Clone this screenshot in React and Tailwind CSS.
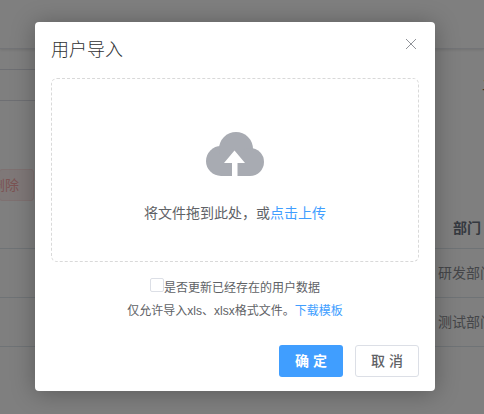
const font = { fontFamily: '"Liberation Sans", "Noto Sans CJK SC", sans-serif' };

function Cloud() {
  return (
    <svg width="60" height="46" viewBox="206 132 60 46" className="block">
      <g fill="#a8abb2">
        <circle cx="222" cy="161" r="15" />
        <circle cx="237" cy="149" r="17" />
        <circle cx="251" cy="162" r="14" />
        <rect x="222" y="150" width="29" height="26" />
      </g>
      <path d="M235.5 150.5 L246 163 L238.5 163 L238.5 178 L233 178 L233 163 L225 163 Z" fill="#fff" />
    </svg>
  );
}

export default function App() {
  return (
    <div style={font} className="relative w-[484px] h-[414px] overflow-hidden bg-white text-[14px] text-[#606266]">
      {/* page behind the overlay */}
      <div className="h-[49px] border-b border-[#e6e9ef] shadow-[0_1px_3px_rgba(0,0,0,0.12)]" />
      <div className="mt-[20px] h-[32px] flex items-center">
        <div className="w-[40px] h-[32px] shrink-0 border-y border-[#dcdfe6]" />
        <span className="ml-[442px] shrink-0 whitespace-nowrap text-[#8a6d4f]">二</span>
      </div>
      <div className="mt-[68px] w-[35px] h-[32px] flex items-center justify-end border border-[#fde2e2] bg-[#fef0f0] rounded-[3px] -ml-px text-[14px] text-[#f9a7a7]">
        <span className="whitespace-nowrap pr-[14px]">删除</span>
      </div>
      <div className="mt-[7px] h-[41px] border-b border-[#dfe6ec] flex items-center pl-[453px] font-bold text-[#6b7280] text-[14px] whitespace-nowrap">部门</div>
      <div className="h-[49px] border-b border-[#dfe6ec] flex items-center pl-[438px] whitespace-nowrap text-[#8a8d92]">研发部门</div>
      <div className="h-[49px] border-b border-[#dfe6ec] flex items-center pl-[438px] whitespace-nowrap text-[#8a8d92]">测试部门</div>

      {/* overlay */}
      <div className="absolute inset-0 bg-black/50">
        <div className="ml-[35px] mt-[22px] w-[400px] h-[369px] bg-white rounded-[4px] shadow-[0_2px_24px_rgba(0,0,0,0.3)] flex flex-col px-[16px]">
          <div className="flex items-start justify-between pt-[16px] h-[56px]">
            <span className="text-[18px] leading-[24px] font-light text-[#303133]">用户导入</span>
            <svg width="12" height="12" viewBox="0 0 12 12" className="mr-[2px]" fill="none" stroke="#909399" strokeWidth="1">
              <path d="M1 1 L11 11 M11 1 L1 11" />
            </svg>
          </div>
          <div className="h-[184px] border border-dashed border-[#d9d9d9] rounded-[6px] flex flex-col items-center">
            <div className="mt-[53px]"><Cloud /></div>
            <div className="mt-[25px] leading-[20px] text-[14px] text-[#606266]">
              将文件拖到此处，或<span className="text-[#409eff]">点击上传</span>
            </div>
          </div>
          <div className="mt-[16px] flex justify-center items-start text-[12px] leading-[16px] text-[#606266]">
            <span className="w-[14px] h-[14px] border border-[#dcdfe6] rounded-[2px] bg-white" />
            <span className="mt-[2px]">是否更新已经存在的用户数据</span>
          </div>
          <div className="mt-[7px] text-center text-[12px] leading-[16px] text-[#606266]">
            仅允许导入xls、xlsx格式文件。<span className="text-[#409eff]">下载模板</span>
          </div>
          <div className="mt-[26px] flex justify-end gap-[12px]">
            <button className="w-[64px] h-[32px] rounded-[3px] bg-[#409eff] text-white text-[14px] font-bold tracking-[4px] pl-[4px]">确定</button>
            <button className="w-[64px] h-[32px] rounded-[3px] border border-[#dcdfe6] bg-white text-[#606266] text-[14px] font-medium tracking-[4px] pl-[4px]">取消</button>
          </div>
        </div>
      </div>
    </div>
  );
}
